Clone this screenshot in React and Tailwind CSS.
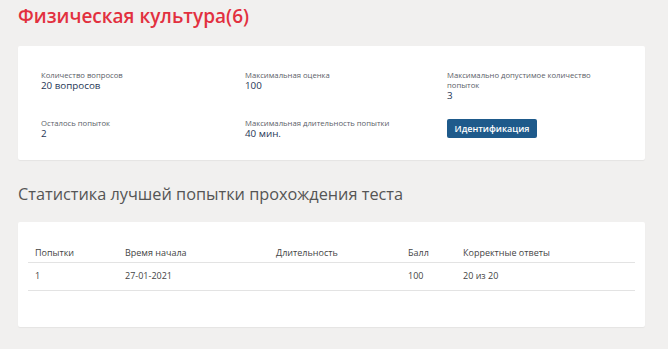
import React from 'react';

const info = [
  { label: 'Количество вопросов', value: '20 вопросов' },
  { label: 'Максимальная оценка', value: '100' },
  { label: 'Максимально допустимое количество попыток', value: '3', narrow: true },
  { label: 'Осталось попыток', value: '2' },
  { label: 'Максимальная длительность попытки', value: '40 мин.' },
];

const columns = ['Попытки', 'Время начала', 'Длительность', 'Балл', 'Корректные ответы'];
const colWidths = ['w-[90px]', 'w-[151px]', 'w-[132px]', 'w-[55px]', ''];
const rows = [['1', '27-01-2021', '', '100', '20 из 20']];

function InfoItem({ label, value, narrow }) {
  return (
    <div className="flex flex-col">
      <span className={`text-[7.7px] leading-[10px] text-[#5a6068] ${narrow ? 'max-w-[150px]' : ''}`}>
        {label}
      </span>
      <span className="text-[9.8px] leading-[11px] font-medium text-[#1f3656]">{value}</span>
    </div>
  );
}

export default function App() {
  return (
    <div
      className="w-[668px] h-[349px] bg-[#f1f0ef] overflow-hidden"
      style={{ fontFamily: '"Open Sans", "Liberation Sans", sans-serif' }}
    >
      <div className="w-[627px] ml-[18px] flex flex-col">
        <h1 className="text-[19px] leading-[26px] font-semibold text-[#e2303f] mt-[3px]">
          Физическая культура(6)
        </h1>

        {/* Test info card */}
        <div className="bg-white rounded-[2px] mt-[17px] h-[114px] pl-[23px] pt-[24px] shadow-[0_1px_1px_rgba(0,0,0,0.05)]">
          <div className="grid grid-cols-[204px_202px_1fr] gap-y-[13px]">
            <InfoItem {...info[0]} />
            <InfoItem {...info[1]} />
            <InfoItem {...info[2]} />
            <div className="pt-[4px]">
              <InfoItem {...info[3]} />
            </div>
            <div className="pt-[4px]">
              <InfoItem {...info[4]} />
            </div>
            <div>
              <button className="w-[90px] h-[19px] rounded-[2px] bg-[#1e5a8b] text-white text-[9px] font-semibold leading-[19px]">
                Идентификация
              </button>
            </div>
          </div>
        </div>

        <h2 className="text-[16.3px] leading-[22px] text-[#555555] mt-[23px]">
          Статистика лучшей попытки прохождения теста
        </h2>

        {/* Best attempt table */}
        <div className="bg-white rounded-[2px] mt-[17px] h-[105px] px-[10px] pt-[21px] shadow-[0_1px_1px_rgba(0,0,0,0.05)]">
          <table className="w-full table-fixed text-[9px] text-[#444] border-collapse">
            <thead>
              <tr className="border-b border-[#e3e3e3]">
                {columns.map((c, i) => (
                  <th key={c} className={`text-left font-normal pl-[7px] h-[19px] align-middle ${colWidths[i]}`}>
                    {c}
                  </th>
                ))}
              </tr>
            </thead>
            <tbody>
              {rows.map((r, ri) => (
                <tr key={ri} className="border-b border-[#e3e3e3]">
                  {r.map((cell, ci) => (
                    <td key={ci} className="pl-[7px] h-[28px] align-middle">
                      {cell}
                    </td>
                  ))}
                </tr>
              ))}
            </tbody>
          </table>
        </div>
      </div>
    </div>
  );
}
